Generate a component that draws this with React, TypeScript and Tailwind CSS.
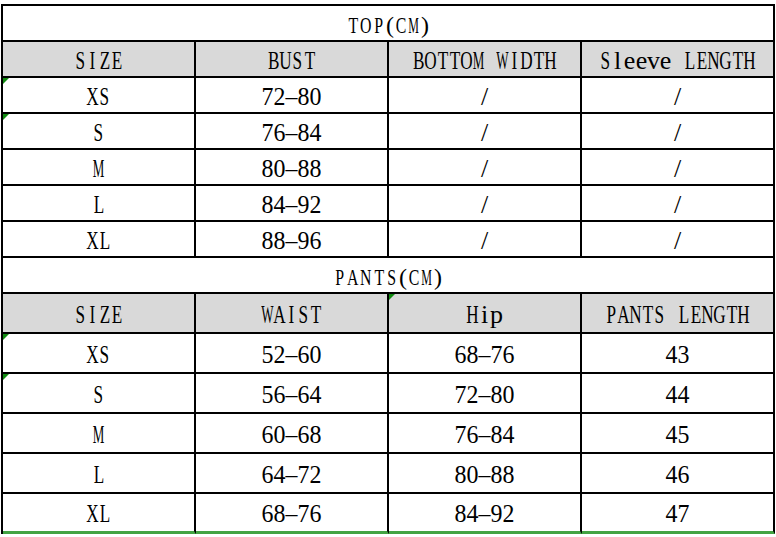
import type { ReactNode } from 'react';

type Row = string[];

const topRows: Row[] = [
  ['XS', '72–80', '/', '/'],
  ['S', '76–84', '/', '/'],
  ['M', '80–88', '/', '/'],
  ['L', '84–92', '/', '/'],
  ['XL', '88–96', '/', '/'],
];

const pantsRows: Row[] = [
  ['XS', '52–60', '68–76', '43'],
  ['S', '56–64', '72–80', '44'],
  ['M', '60–68', '76–84', '45'],
  ['L', '64–72', '80–88', '46'],
  ['XL', '68–76', '84–92', '47'],
];

// SimSun-like half-width cells: every glyph gets a fixed box
const Glyph = ({ c, wide }: { c: string; wide?: boolean }) => {
  const box = wide ? 'inline-flex w-[13px] justify-center' : 'inline-flex w-[12px] justify-center';
  if (c === ' ') return <span className="inline-block w-[12px]" />;
  if (c === '(' || c === ')') return <span className="inline-flex w-[9px] justify-center">{c}</span>;
  if (c === 'M' || c === 'W')
    return (
      <span className={box}>
        <span className="inline-block scale-x-[0.5]">{c}</span>
      </span>
    );
  if (/[A-Z]/.test(c))
    return (
      <span className={box}>
        <span className="inline-block scale-x-[0.66]">{c}</span>
      </span>
    );
  if (/[0-9–]/.test(c))
    return (
      <span className={box}>
        <span className="inline-block scale-x-[0.92]">{c}</span>
      </span>
    );
  return <span className={box}>{c}</span>;
};

const Text = ({ value, wide }: { value: string; wide?: boolean }) => (
  <span className="inline-flex whitespace-pre">
    {value.split('').map((c, i) => (
      <Glyph key={i} c={c} wide={wide} />
    ))}
  </span>
);

const Marker = () => (
  <span className="absolute left-0 top-0 h-0 w-0 border-t-[6px] border-r-[6px] border-t-[#118a11] border-r-transparent" />
);

const Cell = ({
  children,
  header,
  tall,
  marker,
  last,
}: {
  children: ReactNode;
  header?: boolean;
  tall?: boolean;
  marker?: boolean;
  last?: boolean;
}) => (
  <div
    className={`relative flex items-center justify-center border-r-2 border-black pt-[3px] ${
      tall ? 'h-[40px]' : 'h-[36px]'
    } ${header ? 'bg-[#d9d9d9]' : 'bg-white'} ${
      last ? 'border-b-[3px] border-b-[#43a343]' : 'border-b-2 border-b-black'
    }`}
  >
    {marker && <Marker />}
    {children}
  </div>
);

const Title = ({ value }: { value: string }) => (
  <div className="flex h-[36px] items-center justify-center border-b-2 border-r-2 border-black bg-white pt-[3px] text-[24px]">
    <Text value={value} wide />
  </div>
);

export default function App() {
  return (
    <div className="h-[537px] w-[776px] overflow-hidden bg-white font-[family-name:Liberation_Serif,Times_New_Roman,serif] text-[26px] leading-none text-black">
      <div className="ml-[1px] mt-[4px] w-[774px] border-l-2 border-t-2 border-black">
        <Title value="TOP(CM)" />
        <div className="grid grid-cols-[193px_193px_193px_193px]">
          {['SIZE', 'BUST', 'BOTTOM WIDTH', 'Sleeve LENGTH'].map((h) => (
            <Cell key={h} header>
              <Text value={h} />
            </Cell>
          ))}
          {topRows.map((row, r) =>
            row.map((v, c) => (
              <Cell key={`${r}-${c}`} marker={c === 0 && r < 2}>
                <Text value={v} />
              </Cell>
            ))
          )}
        </div>
        <Title value="PANTS(CM)" />
        <div className="grid grid-cols-[193px_193px_193px_193px]">
          {['SIZE', 'WAIST', 'Hip', 'PANTS LENGTH'].map((h, i) => (
            <Cell key={h} header tall marker={i === 2}>
              <Text value={h} />
            </Cell>
          ))}
          {pantsRows.map((row, r) =>
            row.map((v, c) => (
              <Cell key={`${r}-${c}`} tall marker={c === 0 && r < 2} last={r === pantsRows.length - 1}>
                <Text value={v} />
              </Cell>
            ))
          )}
        </div>
      </div>
    </div>
  );
}
